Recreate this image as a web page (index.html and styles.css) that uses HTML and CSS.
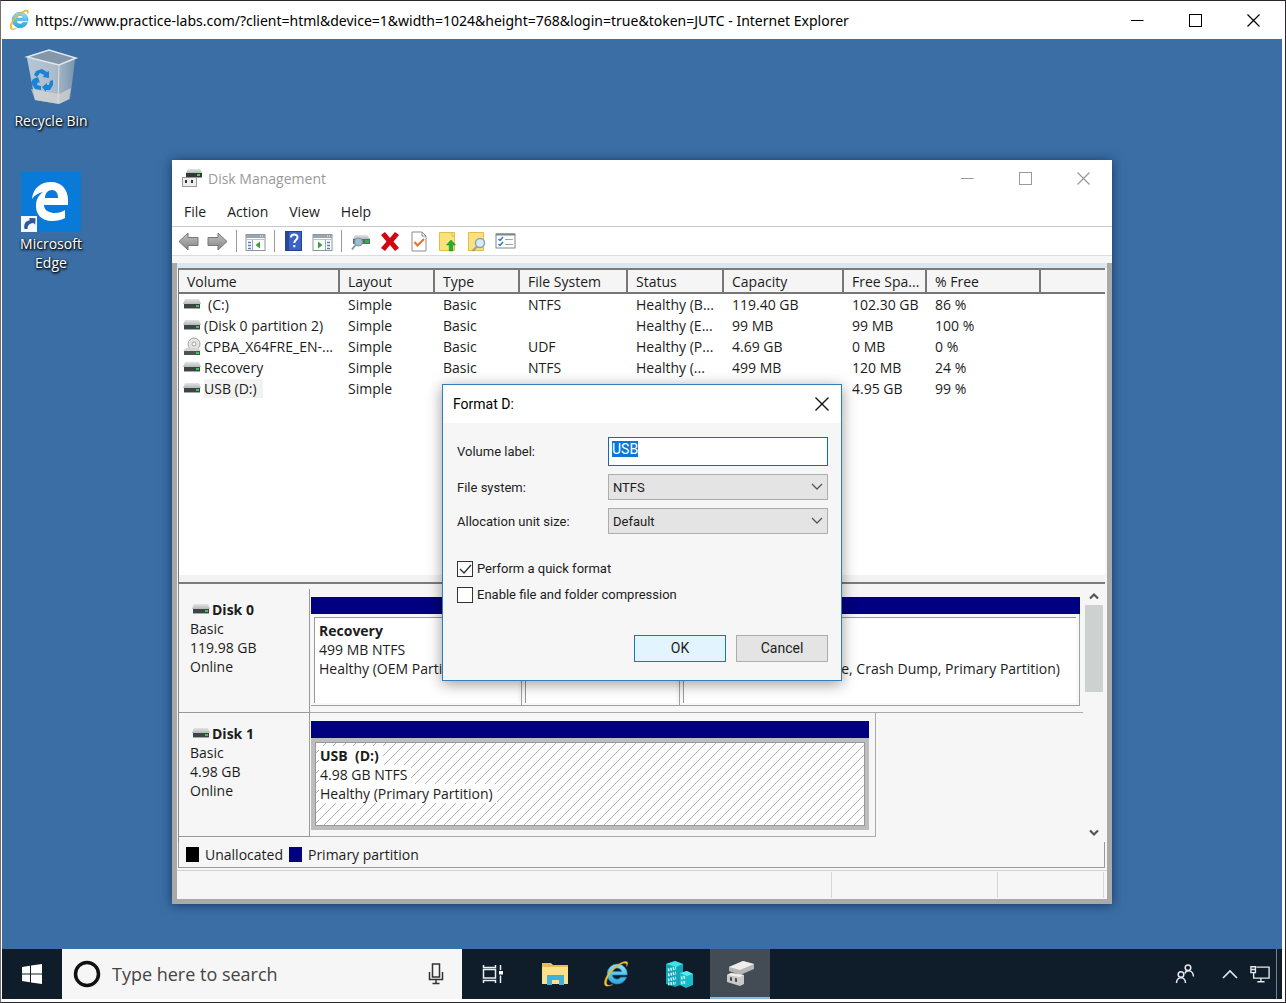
FILE: index.html
```html
<!DOCTYPE html>
<html lang="en">
<head>
<meta charset="utf-8">
<title>Disk Management</title>
<link rel="stylesheet" href="styles.css">
</head>
<body>
<svg class="defs" aria-hidden="true">
  <defs>
    <linearGradient id="silver" x1="0" y1="0" x2="0" y2="1"><stop offset="0" stop-color="#e3e5e5"/><stop offset="1" stop-color="#b4b8b9"/></linearGradient>
    <linearGradient id="arrow" x1="0" y1="0" x2="0" y2="1"><stop offset="0" stop-color="#c2c2c2"/><stop offset="1" stop-color="#858585"/></linearGradient>
    <linearGradient id="bin" x1="0" y1="0" x2="1" y2="0"><stop offset="0" stop-color="#c3cfdb"/><stop offset=".6" stop-color="#b4c1cd"/><stop offset="1" stop-color="#7f98ae"/></linearGradient>
    <linearGradient id="ie" x1="0" y1="0" x2="0" y2="1"><stop offset="0" stop-color="#8be4fb"/><stop offset="1" stop-color="#2ba6de"/></linearGradient>
    <symbol id="drive" viewBox="0 0 18 12">
      <path d="M2 0h14l2 5H0z" fill="url(#silver)"/>
      <rect x="1" y="5" width="16" height="4" fill="#3c4543"/>
      <rect x="1" y="9" width="16" height="1" fill="#a5a9a8"/>
      <rect x="13" y="6" width="3" height="2" fill="#35c84a"/>
    </symbol>
    <symbol id="ielogo" viewBox="0 0 28 28">
      <path d="M14 4a10 10 0 1 0 9.600 13.200h-5.800a4.800 4.800 0 0 1-8.600-2.200h15a10 10 0 0 0-10.200-11zM9.300 11.600a4.900 4.900 0 0 1 9.400 0z" fill="url(#ie)" stroke="#2586bd" stroke-width=".6"/>
      <path d="M23.500 6.500C27 1 23 0 17 3.200 9 7.500 1 17 1.400 23.500c.3 4 4.600 3 8.600 1-3.500 1-6.500 1.300-6.500-1.700C3.500 17 11 8 17.500 4.600c4.500-2.300 7-1.600 6 1.900z" fill="#f2c53a" stroke="#c9961b" stroke-width=".4"/>
    </symbol>
    <symbol id="min" viewBox="0 0 13 13"><path d="M0 6.500h12.500" stroke="currentColor"/></symbol>
    <symbol id="max" viewBox="0 0 13 13"><rect x=".5" y=".5" width="12" height="12" fill="none" stroke="currentColor"/></symbol>
    <symbol id="close" viewBox="0 0 13 13"><path d="M.5.5l12 12M12.500.5l-12 12" stroke="currentColor" stroke-width="1.200"/></symbol>
  </defs>
</svg>

<div class="browser">
  <header class="browser-bar">
    <svg class="browser-logo"><use href="#ielogo"/></svg>
    <h1 class="browser-title">https://www.practice-labs.com/?client=html&amp;device=1&amp;width=1024&amp;height=768&amp;login=true&amp;token=JUTC - Internet Explorer</h1>
    <div class="controls">
      <button aria-label="Minimize"><svg><use href="#min"/></svg></button>
      <button aria-label="Maximize"><svg><use href="#max"/></svg></button>
      <button aria-label="Close"><svg><use href="#close"/></svg></button>
    </div>
  </header>

  <main class="desktop">
    <div class="shortcuts">
      <a class="shortcut" href="#recycle">
        <svg class="shortcut-icon" viewBox="0 0 60 60">
          <path d="M6 9l8 42 24 4 11-5 5-39z" fill="url(#bin)" opacity=".92"/>
          <path d="M10 40l4 11 24 4 10-5 2-11-12 6z" fill="#d8d4d0" opacity=".7"/>
          <path d="M6 8l22-7 27 8-17 7z" fill="#8397a8" stroke="#dfe8f0" stroke-width="1.500"/>
          <path d="M38 16l-1 38" stroke="#dce3e9" stroke-width="1"/>
          <g fill="#1883d7"><path d="M15 22l6-2 5 3 2-1 0 7-6-1 1-2-4-2-3 4-3-2z"/><path d="M12 30l5-2 2 6-2-1-1 3 4 1 0 4-6-1-4-6z"/><path d="M21 38l5-4v2h2l1-4 3-1 0 5-3 5-4 0v2z"/></g>
        </svg>
        <span>Recycle Bin</span>
      </a>
      <a class="shortcut" href="#edge">
        <svg class="shortcut-icon" viewBox="0 0 60 60">
          <rect width="60" height="60" fill="#0a7ad8"/>
          <path d="M11 27C12 16 20 10 30 10c11 0 17 8 17 18v5H23c0 6 6 8 11 8 4 0 7-1 10-3v8c-3 2-8 3-13 3-11 0-16-7-16-15 0-7 3-11 7-14-5 1-8 3-11 7zm13-1h13c0-5-2-8-6-8-4 0-7 3-7 8z" fill="#fff"/>
          <rect x="0" y="44" width="16" height="16" fill="#f3f6fa"/>
          <path d="M3.500 57c-1-5 1-8 5-8.500V46l6 .3-.3 6.200-1.700-1.500c-4 .5-6 2-6 6z" fill="#2b5a9c"/>
        </svg>
        <span>Microsoft Edge</span>
      </a>
    </div>

    <section class="manager" aria-label="Disk Management">
      <header class="manager-bar">
        <svg class="manager-icon" viewBox="0 0 20 20">
          <path d="M6 1h12l2 4H4z" fill="url(#silver)"/><path d="M4 5h16v4H4z" fill="#2f3a36"/><path d="M15 6h3v2h-3z" fill="#3bd04e"/>
          <path d="M4 9h16v1H4z" fill="#9da1a1"/><rect x=".5" y="9.500" width="14" height="9" fill="#eee" stroke="#999"/><path d="M3 12h2v3H3zM9 12h2v3H9z" fill="#333"/>
        </svg>
        <h2>Disk Management</h2>
        <div class="controls controls-inactive">
          <button aria-label="Minimize"><svg><use href="#min"/></svg></button>
          <button aria-label="Maximize"><svg><use href="#max"/></svg></button>
          <button aria-label="Close"><svg><use href="#close"/></svg></button>
        </div>
      </header>
      <nav class="menu">
        <button>File</button><button>Action</button><button>View</button><button>Help</button>
      </nav>
      <div class="toolbar">
        <button aria-label="Back"><svg viewBox="0 0 21 21"><path d="M1 10.500L10 2v4.500h10v8H10V19z" fill="url(#arrow)" stroke="#777"/></svg></button>
        <button aria-label="Forward"><svg viewBox="0 0 21 21"><path d="M20 10.500L11 2v4.500H1v8h10V19z" fill="url(#arrow)" stroke="#777"/></svg></button>
        <i></i>
        <button aria-label="Show console tree"><svg viewBox="0 0 21 21"><rect x="1" y="3.500" width="19" height="16" fill="#fff" stroke="#8d969e"/><path d="M1 4h19v3H1z" fill="#9aa5ae"/><path d="M2 8.500h17" stroke="#b9c3cb"/><path d="M15 5h1M17 5h1" stroke="#fff"/><path d="M3 11.500h3M3 14.500h3M3 17.500h3" stroke="#4b83c4" stroke-width="1.500"/><path d="M7.500 9v10" stroke="#9aa5ae"/><path d="M15 10.500v7L10.500 14z" fill="#37a03c"/></svg></button>
        <i></i>
        <button aria-label="Help"><svg viewBox="0 0 21 21"><rect x="2.500" y=".5" width="16" height="19" fill="#3b62c8" stroke="#27418f"/><path d="M3 1h3v18H3z" fill="#2a479f"/><path d="M8 6.500c0-4 6.500-4 6.500-.2 0 2.700-3.200 2.900-3.200 5.700M11.300 14v2.300" stroke="#fff" stroke-width="2" fill="none"/></svg></button>
        <button aria-label="Show action pane"><svg viewBox="0 0 21 21"><rect x="1" y="3.500" width="19" height="16" fill="#fff" stroke="#8d969e"/><path d="M1 4h19v3H1z" fill="#9aa5ae"/><path d="M2 8.500h17" stroke="#b9c3cb"/><path d="M15 5h1M17 5h1" stroke="#fff"/><path d="M15 11.500h3M15 14.500h3M15 17.500h3" stroke="#4b83c4" stroke-width="1.500"/><path d="M13.500 9v10" stroke="#9aa5ae"/><path d="M6 10.500v7l4.500-3.500z" fill="#37a03c"/></svg></button>
        <i></i>
        <button aria-label="Connect"><svg viewBox="0 0 21 21"><path d="M5 4h12l3 4H3z" fill="url(#silver)"/><path d="M3 8h17v5H3z" fill="#5b6b68"/><path d="M15 9h4v3h-4z" fill="#2fae57"/><circle cx="8.500" cy="11" r="4" fill="#9dbdcb" stroke="#7395a5"/><path d="M5.500 14L2 18.500" stroke="#8098a5" stroke-width="2"/></svg></button>
        <button aria-label="Delete"><svg viewBox="0 0 21 21"><path d="M2 4l4-3 5 6 5-6 4 3-5.500 6.500L20 17l-4 3-5-6-5 6-4-3 5.500-6.500z" fill="#d4050f"/></svg></button>
        <button aria-label="Properties"><svg viewBox="0 0 21 21"><path d="M4 1h10l4 4v15H4z" fill="#fff" stroke="#8c8c8c"/><path d="M14 1v4h4" fill="none" stroke="#8c8c8c"/><path d="M6.500 11l3 3.500L16 8" stroke="#e8702a" stroke-width="2" fill="none"/></svg></button>
        <button aria-label="Up"><svg viewBox="0 0 21 21"><path d="M2.500 1.500h15v18h-15z" fill="#fbe17b" stroke="#dfbd4c"/><path d="M15 1v4h3" fill="none" stroke="#dfbd4c"/><path d="M14 9l4.500 5h-2.700V20h-3.600v-6H9.500z" fill="#23b12c" stroke="#178a20" stroke-width=".5"/></svg></button>
        <button aria-label="Find"><svg viewBox="0 0 21 21"><path d="M2.500 1.500h15v18h-15z" fill="#fbe17b" stroke="#dfbd4c"/><circle cx="14" cy="12" r="4.500" fill="#d5ecf8" stroke="#8fa3b3" stroke-width="1.500"/><path d="M11 15.500L6.500 20" stroke="#9a9da0" stroke-width="2"/></svg></button>
        <button aria-label="Settings"><svg viewBox="0 0 21 21"><rect x="1" y="3" width="19" height="14" fill="#fff" stroke="#7c868f"/><path d="M1 3.500h19" stroke="#7c868f" stroke-width="2"/><path d="M3.500 8l1.500 1.500L8 6M3.500 13l1.500 1.500L8 11" stroke="#2f78c8" stroke-width="1.500" fill="none"/><path d="M10 8.500h8M10 13.500h8" stroke="#9aa5ae"/></svg></button>
      </div>

      <div class="frame">
        <div class="panes">
          <div class="volumes">
            <table>
              <colgroup><col class="c-volume"><col class="c-layout"><col class="c-type"><col class="c-fs"><col class="c-status"><col class="c-capacity"><col class="c-free"><col class="c-percent"><col></colgroup>
              <thead><tr><th>Volume</th><th>Layout</th><th>Type</th><th>File System</th><th>Status</th><th>Capacity</th><th>Free Spa...</th><th>% Free</th><th></th></tr></thead>
              <tbody>
                <tr><td><span class="name name-root"><svg><use href="#drive"/></svg>(C:)</span></td><td>Simple</td><td>Basic</td><td>NTFS</td><td>Healthy (B...</td><td>119.40 GB</td><td>102.30 GB</td><td>86 %</td><td></td></tr>
                <tr><td><span class="name"><svg><use href="#drive"/></svg>(Disk 0 partition 2)</span></td><td>Simple</td><td>Basic</td><td></td><td>Healthy (E...</td><td>99 MB</td><td>99 MB</td><td>100 %</td><td></td></tr>
                <tr><td><span class="name"><svg class="disc" viewBox="0 0 18 20"><circle cx="11" cy="7" r="6" fill="#e4e4e4" stroke="#a2a2a2"/><circle cx="11" cy="7" r="2" fill="#fff" stroke="#a2a2a2"/><path d="M3 11h12l3 3H0z" fill="#d4d6d6"/><path d="M1 14h16v4H1z" fill="#4c5553"/><path d="M13 15h3v2h-3z" fill="#35c84a"/></svg>CPBA_X64FRE_EN-...</span></td><td>Simple</td><td>Basic</td><td>UDF</td><td>Healthy (P...</td><td>4.69 GB</td><td>0 MB</td><td>0 %</td><td></td></tr>
                <tr><td><span class="name"><svg><use href="#drive"/></svg>Recovery</span></td><td>Simple</td><td>Basic</td><td>NTFS</td><td>Healthy (...</td><td>499 MB</td><td>120 MB</td><td>24 %</td><td></td></tr>
                <tr><td><span class="name"><svg><use href="#drive"/></svg><mark>USB (D:)</mark></span></td><td>Simple</td><td></td><td></td><td></td><td></td><td>4.95 GB</td><td>99 %</td><td></td></tr>
              </tbody>
            </table>
          </div>

          <div class="map">
            <div class="disks">
              <div class="disk">
                <div class="disk-label"><h3><svg><use href="#drive"/></svg>Disk 0</h3><p>Basic</p><p>119.98 GB</p><p>Online</p></div>
                <div class="disk-area">
                  <div class="stripe"></div>
                  <div class="parts">
                    <div class="part part-recovery"><div class="part-body"><h4>Recovery</h4><p>499 MB NTFS</p><p>Healthy (OEM Partition)</p></div></div>
                    <div class="part part-efi"><div class="part-body"></div></div>
                    <div class="part part-system"><div class="part-body part-end"><p>Healthy (Boot, Page File, Crash Dump, Primary Partition)</p></div></div>
                  </div>
                </div>
              </div>
              <div class="disk">
                <div class="disk-label"><h3><svg><use href="#drive"/></svg>Disk 1</h3><p>Basic</p><p>4.98 GB</p><p>Online</p></div>
                <div class="disk-area disk-area-usb">
                  <div class="stripe"></div>
                  <div class="selected"><div class="hatch"><h4>USB&nbsp; (D:)</h4><p>4.98 GB NTFS</p><p>Healthy (Primary Partition)</p></div></div>
                </div>
              </div>
            </div>
            <div class="scroll">
              <svg viewBox="0 0 10 8"><path d="M1 6.500l4-4 4 4" fill="none" stroke="#555" stroke-width="2.200"/></svg>
              <div class="thumb"></div>
              <svg viewBox="0 0 10 8"><path d="M1 1.500l4 4 4-4" fill="none" stroke="#555" stroke-width="2.200"/></svg>
            </div>
          </div>
          <div class="legend"><span class="swatch swatch-free"></span>Unallocated<span class="swatch"></span>Primary partition</div>
        </div>
        <div class="status"><span></span><span></span><span></span></div>
      </div>
    </section>

    <form class="dialog" role="dialog" aria-label="Format D:">
      <header class="dialog-bar"><h2>Format D:</h2><button type="button" aria-label="Close"><svg viewBox="0 0 14 14"><path d="M.5.5l13 13M13.500.5l-13 13" stroke="#111" stroke-width="1.400"/></svg></button></header>
      <div class="dialog-body">
        <div class="fields">
          <label for="vol">Volume label:</label><input id="vol" class="text" value="USB" autofocus>
          <label for="fs">File system:</label><select id="fs"><option>NTFS</option></select>
          <label for="unit">Allocation unit size:</label><select id="unit"><option>Default</option></select>
        </div>
        <div class="checks">
          <label><input type="checkbox" checked>Perform a quick format</label>
          <label><input type="checkbox">Enable file and folder compression</label>
        </div>
        <div class="actions"><button type="button" class="primary">OK</button><button type="button">Cancel</button></div>
      </div>
    </form>
  </main>

  <footer class="taskbar">
    <button class="start" aria-label="Start"><svg viewBox="0 0 20 20"><path d="M0 3l8-1.200V9.500H0zM9 1.600L20 0v9.500H9zM0 10.500h8v7.700L0 17zM9 10.500h11V20L9 18.400z" fill="#fff"/></svg></button>
    <label class="search">
      <svg class="ring" viewBox="0 0 28 28"><circle cx="14" cy="14" r="11.500" fill="none" stroke="#111" stroke-width="3.500"/></svg>
      <input type="text" placeholder="Type here to search" aria-label="Search">
      <svg class="mic" viewBox="0 0 16 22"><rect x="4.500" y="1" width="7" height="13" fill="none" stroke="#333" stroke-width="1.500"/><path d="M1.500 9v7.500h13V9M8 17v3.500M4.500 20.500h7" fill="none" stroke="#333" stroke-width="1.500"/></svg>
    </label>
    <button class="task task-view" aria-label="Task View"><svg viewBox="0 0 22 22"><path d="M1.500 2v2.500h12V2M1.500 20v-2.500h12V20M1.500 6.500h12v8.500h-12zM18.500 2v5M18.500 12.500V20" fill="none" stroke="#e8edf0" stroke-width="1.500"/><path d="M17 8h4v3.500h-4z" fill="#fff"/></svg></button>
    <button class="task" aria-label="File Explorer"><svg viewBox="0 0 28 28"><path d="M1 3h9l2 2h15v19H1z" fill="#e9bd55"/><path d="M1 7h26v17H1z" fill="#fbe08d"/><path d="M6 25V15h17v10h-5v-5h-7v5z" fill="#3fb1dc"/></svg></button>
    <button class="task" aria-label="Internet Explorer"><svg viewBox="0 0 28 28"><use href="#ielogo"/></svg></button>
    <button class="task" aria-label="Server Manager"><svg viewBox="0 0 28 28"><path d="M1 4l9-3 8 3v20l-8 3-9-3z" fill="#12a5b5"/><path d="M1 4l9-3 8 3-7 3z" fill="#3fe0ea"/><path d="M15 13l7-2 6 3v11l-7 3-6-3z" fill="#19bccb"/><path d="M15 13l7-2 6 3-6 2z" fill="#5aeaf1"/><path d="M3 10l8-2M3 15l8-2M3 20l8-2M3 24l8-1M16 18l5-1M16 23l5-1" stroke="#c9f7fa" stroke-width="3" stroke-dasharray="1.500 1"/></svg></button>
    <button class="task task-active" aria-label="Disk Management"><svg viewBox="0 0 28 28"><path d="M3 8l14-6 11 3v5l-14 6-11-4z" fill="#b5b5b3"/><path d="M3 8l14-6 11 3-14 6z" fill="#eeeeec"/><path d="M1 16l4-2 13 2v9l-4 2-13-4z" fill="#c9c9c8"/><path d="M1 16l4-2 13 2-4 2z" fill="#efefef"/><path d="M4 18l2 .5v3.500l-2-.6zM9 19l2 .5v3.500l-2-.6z" fill="#444"/></svg></button>
    <div class="tray">
      <button aria-label="People"><svg viewBox="0 0 20 20"><g fill="none" stroke="#e6eaed" stroke-width="1.500"><circle cx="6" cy="10.500" r="2.800"/><path d="M1.500 19c0-7 9-7 9 0"/><circle cx="13" cy="3.800" r="2.800"/><path d="M10 9.500c1-4 8-4 8.500 3"/></g></svg></button>
      <button aria-label="Show hidden icons"><svg viewBox="0 0 20 20"><path d="M3 14l7-7 7 7" fill="none" stroke="#e6eaed" stroke-width="1.600"/></svg></button>
      <button aria-label="Network"><svg viewBox="0 0 22 20"><g fill="none" stroke="#e6eaed" stroke-width="1.500"><path d="M7 2.500h14v12H4V9M12 15v3M8 18.500h8"/><path d="M1 2h5v6.500H1zM1 5h5"/></g></svg></button>
    </div>
  </footer>
</div>
<script>document.getElementById('vol').select();</script>
</body>
</html>
```
FILE: styles.css
```css
* { box-sizing: border-box; }
body { margin: 0; font: 14px/19px "Open Sans", "Noto Sans", sans-serif; color: #1c1c1c; }
h1, h2, h3, h4, p { margin: 0; font-size: inherit; font-weight: 400; }
button { border: 0; padding: 0; background: none; font: inherit; color: inherit; }
svg { display: block; }
.defs { position: absolute; width: 0; height: 0; }

.browser { display: flex; flex-direction: column; height: 100vh; min-height: 960px; background: #fff; border: 1px solid #2b262b; border-left-color: #77706f; padding: 0 3px 3px 1px; }
.browser-bar { display: flex; align-items: center; height: 38px; flex: none; padding-left: 7px; }
.browser-logo { width: 22px; height: 22px; margin-right: 4px; }
.browser-title { flex: 1; white-space: nowrap; color: #000; font-family: "Noto Sans", sans-serif; }
.controls { display: flex; color: #000; }
.controls button { width: 58px; height: 36px; display: grid; place-items: center; }
.controls svg { width: 13px; height: 13px; }
.controls-inactive { color: #999; }

.desktop { flex: 1; position: relative; background: #3a6ea5; }
.shortcuts { display: flex; flex-direction: column; gap: 42px; width: 98px; padding-top: 10px; }
.shortcut { display: flex; flex-direction: column; align-items: center; gap: 2px; text-align: center; text-decoration: none; color: #fff; text-shadow: 1px 1px 2px #000, 0 1px 3px #000; }
.shortcut span { width: 80px; }
.shortcut-icon { width: 60px; height: 60px; }

.manager { position: absolute; left: 170px; right: 170px; top: 121px; background: linear-gradient(#fff 90px, #f6f6f6 96px); box-shadow: 0 1px 10px rgba(0, 20, 50, .6); }
.manager-bar { display: flex; align-items: center; height: 36px; padding-left: 10px; color: #999; }
.manager-bar h2 { flex: 1; }
.manager-icon { width: 20px; height: 20px; margin-right: 6px; }
.menu { display: flex; gap: 21px; height: 30px; padding: 0 12px; align-items: center; }
.toolbar { display: flex; align-items: center; height: 30px; padding: 0 2px; border-top: 1px solid #c8c8c8; border-bottom: 1px solid #dcdcdc; background: #fff; }
.toolbar button { width: 29px; display: grid; place-items: center; }
.toolbar svg { width: 21px; height: 21px; }
.toolbar i { width: 9px; height: 22px; border-left: 1px solid #999; margin-left: 4px; margin-right: -4px; }
.frame { border: solid #a9a9a9; border-width: 0 5px 5px; background: #f6f6f6; margin-top: 7px; }

.panes { border-top: 5px solid #dce6f0; padding: 0 2px 0 1px; }
.volumes { height: 316px; background: #fff; border: solid #7b7b7b; border-width: 2px 0 2px 1px; box-shadow: inset 0 -7px 0 #f3f3f3; }
.volumes table { width: 100%; table-layout: fixed; border-collapse: separate; border-spacing: 0; }
.c-volume { width: 161px; }
.c-layout { width: 95px; }
.c-type { width: 85px; }
.c-fs { width: 108px; }
.c-status { width: 96px; }
.c-capacity { width: 120px; }
.c-free { width: 83px; }
.c-percent { width: 114px; }
.volumes th { height: 24px; padding: 0 0 0 8px; text-align: left; font-weight: 400; background: #f5f5f5; border: solid #777; border-width: 0 2px 2px 0; white-space: nowrap; }
.volumes th:last-child { border-right: 0; }
.volumes td { height: 21px; padding: 0 0 0 8px; white-space: nowrap; }
.volumes td:first-child { padding-left: 4px; }
.name { display: flex; align-items: center; gap: 3px; height: 19px; }
.name-root { gap: 7px; }
.name svg { width: 18px; height: 12px; }
.name svg.disc { height: 20px; }
mark { background: #f2f2f2; color: inherit; padding-right: 6px; }

.map { display: flex; height: 258px; border-left: 1px solid #8a8a8a; padding-top: 5px; }
.disks { flex: 1; }
.disk { display: flex; height: 124px; }
.disk-label { width: 131px; padding: 11px; border: solid #999; border-width: 0 1px 1px 0; }
.disk-label h3 { display: flex; align-items: center; gap: 2px; font-weight: 700; padding-left: 2px; }
.disk-label svg { width: 18px; height: 12px; }
.disk-area { flex: 1; padding: 8px 3px 5px 1px; border-bottom: 1px solid #aaa; }
.disk-area-usb { flex: none; width: 566px; padding-right: 6px; border-right: 1px solid #aaa; }
.stripe { height: 17px; background: #000080; }
.parts { display: flex; }
.part { height: 92px; padding: 3px; border: solid #a0a0a0; border-width: 0 1px 1px 0; background: #f8f8f8; overflow: hidden; }
.part-recovery { width: 211px; }
.part-efi { width: 158px; }
.part-system { flex: 1; }
.part-body { height: 86px; background: #fff; border: solid #999; border-width: 1px 0 0 1px; padding: 3px 4px; white-space: nowrap; overflow: hidden; }
.part-end { padding: 41px 16px 0 0; text-align: right; }
h4 { font-weight: 700; }
.selected { border: 4px solid #bdbdbd; height: 92px; }
.hatch { height: 84px; border: 1px solid #999; padding: 3px; background: linear-gradient(135deg, #fff 46%, #b0b0b0 46% 54%, #fff 54%) 0 0 / 10px 10px; }
.hatch > * { width: fit-content; background: #fff; padding: 0 4px 0 1px; }

.scroll { width: 22px; display: flex; flex-direction: column; align-items: center; padding: 3px 2px 5px; }
.scroll svg { width: 10px; height: 8px; }
.thumb { width: 18px; height: 87px; margin-top: 5px; margin-bottom: auto; background: #cdd1cf; }
.legend { display: flex; align-items: center; gap: 6px; height: 26px; padding-left: 7px; border: solid #999; border-width: 0 1px 1px 1px; }
.swatch { width: 13px; height: 15px; background: #000080; }
.swatch-free { background: #000; }
.status { display: flex; height: 29px; margin-top: 2px; border-top: 1px solid #d0d0d0; padding: 1px 3px; }
.status span { border-right: 1px solid #d6d6d6; width: 106px; }
.status span:first-child { flex: 1; }
.status span:nth-child(2) { width: 166px; }

.dialog { position: absolute; left: calc(50% - 200px); top: 345px; width: 400px; font: 13px/19px "Roboto", "Liberation Sans", sans-serif; background: #f6f6f6; border: 1px solid #2f7fc0; box-shadow: 0 3px 14px rgba(0, 0, 0, .4); }
.dialog-bar { display: flex; justify-content: space-between; align-items: center; height: 38px; padding: 0 12px 0 10px; background: #fff; font-size: 14px; color: #000; }
.dialog-bar svg { width: 14px; height: 14px; }
.dialog-body { padding: 14px 13px 18px 14px; }
.fields { display: grid; grid-template-columns: 1fr 220px; gap: 8px 0; align-items: center; }
.text { height: 29px; border: 1px solid #0a6cc4; background: #fff; padding: 0 3px 5px; font: inherit; font-size: 14px; border-radius: 0; outline: 0; }
.text::selection { background: #0a78d4; color: #fff; }
select { appearance: none; height: 26px; border: 1px solid #adadad; border-radius: 0; padding: 0 4px; font: inherit; color: inherit; background: #e4e4e4 url("data:image/svg+xml,%3Csvg xmlns='http://www.w3.org/2000/svg' width='12' height='8'%3E%3Cpath d='M1 1l5 5 5-5' fill='none' stroke='%23555' stroke-width='1.3'/%3E%3C/svg%3E") no-repeat right 4px center; }
.checks { display: grid; gap: 7px; margin-top: 25px; }
.checks label { display: flex; align-items: center; gap: 4px; }
.checks input { appearance: none; width: 16px; height: 16px; margin: 0; border: 1px solid #333; background: #fff; }
.checks input:checked { background: #fff url("data:image/svg+xml,%3Csvg xmlns='http://www.w3.org/2000/svg' width='14' height='14'%3E%3Cpath d='M2 7l4 4 7-8' fill='none' stroke='%23333' stroke-width='1.4'/%3E%3C/svg%3E") center; }
.actions { display: flex; justify-content: flex-end; gap: 10px; margin-top: 31px; }
.actions button { width: 92px; height: 27px; border: 1px solid #adadad; background: #e4e4e4; font-size: 14px; }
.actions .primary { border-color: #0a78d4; background: #e2f4fe; }

.taskbar { display: flex; height: 50px; flex: none; background: #0f1c29; }
.start { width: 60px; display: grid; place-items: center; }
.start svg { width: 20px; height: 20px; }
.search { display: flex; align-items: center; width: 400px; padding: 0 18px 0 11px; background: #f6f6f6; }
.search input { flex: 1; min-width: 0; border: 0; padding: 0; margin-left: 11px; background: none; font: 18px/24px "Open Sans", sans-serif; outline: 0; }
.search input::placeholder { color: #444; opacity: 1; }
.ring { width: 28px; height: 28px; }
.mic { width: 16px; height: 22px; }
.task { width: 62px; display: grid; place-items: center; }
.task svg { width: 28px; height: 28px; }
.task-view svg { width: 22px; height: 22px; }
.task-active { width: 60px; background: #434c54; border-bottom: 2px solid #8ab9e0; }
.tray { display: flex; align-items: center; margin-left: auto; border-right: 1px solid #77808a; margin-right: 5px; padding-right: 1px; }
.tray button { width: 30px; display: grid; place-items: center; }
.tray button:first-child { margin-right: 15px; }
.tray svg { width: 20px; height: 20px; }
```
